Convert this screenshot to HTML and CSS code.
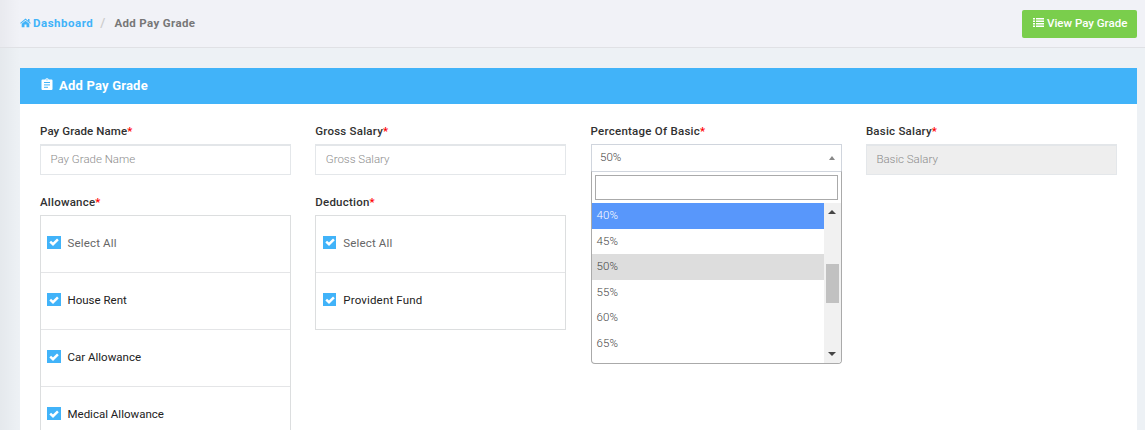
FILE: index.html
```html
<!DOCTYPE html>
<html lang="en">
<head>
<meta charset="utf-8">
<title>Add Pay Grade</title>
<link rel="stylesheet" href="styles.css">
</head>
<body>
<svg class="defs" aria-hidden="true">
  <symbol id="check" viewBox="0 0 10 8"><path d="M1.200 3.600 4 6.200 8.900 1.400" fill="none" stroke="#fff" stroke-width="2.500"/></symbol>
</svg>
<header class="topbar">
  <nav class="crumbs">
    <svg class="home" viewBox="0 0 11 10"><path d="M5.5 2.7 9.3 5.8V9.3H6.5V6.5h-2v2.8H1.7V5.8z"/><path d="M.5 5.4 5.5 1.2l5 4.2" fill="none" stroke="#41b3f9" stroke-width="1.1"/><path d="M8 1h1.5v3L8 2.8z"/></svg>
    <a class="crumb-link">Dashboard</a><span class="slash">/</span><span class="crumb-current">Add Pay Grade</span>
  </nav>
  <a class="view-btn"><svg class="list-icon" viewBox="0 0 11 9"><path d="M0 0h2v1.6H0zM3 0h8v1.6H3zM0 2.5h2v1.6H0zM3 2.5h8v1.6H3zM0 5h2v1.6H0zM3 5h8v1.6H3zM0 7.4h2V9H0zM3 7.4h8V9H3z"/></svg><span>View Pay Grade</span></a>
</header>
<main class="panel">
  <h1 class="panel-head"><svg class="clip" viewBox="0 0 12 13"><path fill="#fff" d="M1.5 1.5h2.8a1.8 1.8 0 0 1 3.4 0h2.8a1 1 0 0 1 1 1V11a1 1 0 0 1-1 1h-9a1 1 0 0 1-1-1V2.500a1 1 0 0 1 1-1z"/><path d="M3 4.500h6M3 6.900h6M3 9.300h4" stroke="#41b3f9" stroke-width="1"/><circle cx="6" cy="1.800" r=".6" fill="#41b3f9"/></svg><span>Add Pay Grade</span></h1>
  <form class="fields">
    <div class="field">
      <label class="label w-name">Pay Grade Name<b>*</b></label>
      <div class="input">Pay Grade Name</div>
    </div>
    <div class="field">
      <label class="label">Gross Salary<b>*</b></label>
      <div class="input">Gross Salary</div>
    </div>
    <div class="field">
      <label class="label w-percent">Percentage Of Basic<b>*</b></label>
      <div class="select"><span class="value">50%</span><i class="arrow"></i>
        <div class="dropdown">
          <div class="search"></div>
          <div class="results">
            <ul class="options">
              <li class="option highlighted">40%</li>
              <li class="option">45%</li>
              <li class="option selected">50%</li>
              <li class="option">55%</li>
              <li class="option">60%</li>
              <li class="option">65%</li>
            </ul>
            <div class="scrollbar"><i class="arrow up"></i><div class="thumb"></div><i class="arrow down"></i></div>
          </div>
        </div>
      </div>
    </div>
    <div class="field">
      <label class="label">Basic Salary<b>*</b></label>
      <div class="input disabled">Basic Salary</div>
    </div>
    <div class="field">
      <label class="label">Allowance<b>*</b></label>
      <ul class="checks wide">
        <li class="check-row all"><span class="box"><svg><use href="#check"/></svg></span>Select All</li>
        <li class="check-row"><span class="box"><svg><use href="#check"/></svg></span>House Rent</li>
        <li class="check-row"><span class="box"><svg><use href="#check"/></svg></span>Car Allowance</li>
        <li class="check-row"><span class="box"><svg><use href="#check"/></svg></span>Medical Allowance</li>
      </ul>
    </div>
    <div class="field">
      <label class="label">Deduction<b>*</b></label>
      <ul class="checks">
        <li class="check-row all"><span class="box"><svg><use href="#check"/></svg></span>Select All</li>
        <li class="check-row"><span class="box"><svg><use href="#check"/></svg></span>Provident Fund</li>
      </ul>
    </div>
  </form>
</main>
</body>
</html>
```
FILE: styles.css
```css
* { box-sizing: border-box; }
body {
  margin: 0;
  height: 430px;
  overflow: hidden;
  background: linear-gradient(90deg, rgba(0,0,0,.035), rgba(0,0,0,0) 20px), #edf1f5;
  font: 300 11.5px/16px Roboto, "Noto Sans", sans-serif;
  color: #565656;
}
ul { list-style: none; margin: 0; padding: 0; }
.defs { display: none; }
.topbar {
  height: 48px;
  padding: 0 8px 0 20px;
  display: flex;
  align-items: center;
  justify-content: space-between;
  background: linear-gradient(90deg, rgba(0,0,0,.035), rgba(0,0,0,0) 20px), #f1f2f7;
  border-bottom: 1px solid #e0e1e5;
}
.crumbs { display: flex; align-items: center; height: 16px; margin-top: -1px; font-weight: 700; }
.home { width: 11px; height: 10px; fill: #41b3f9; margin-right: 2px; }
.crumb-link { color: #41b3f9; letter-spacing: .52px; }
.slash { color: #ccc; font-size: 13px; font-weight: 500; margin: 0 9px 0 7px; }
.crumb-current { color: #777; letter-spacing: .35px; }
.view-btn {
  width: 115px;
  height: 28px;
  display: flex;
  align-items: center;
  padding: 0 0 2px 11px;
  gap: 3px;
  border-radius: 2px;
  background: #7ace4c;
  color: #fff;
  font-weight: 500;
  white-space: nowrap;
}
.list-icon { width: 11px; height: 9px; flex: none; fill: #fff; }
.panel { margin: 20px 8px 0 20px; height: 362px; overflow: hidden; background: #fff; }
.panel-head {
  margin: 0;
  height: 36px;
  padding-left: 21px;
  display: flex;
  align-items: center;
  gap: 6px;
  background: #41b3f9;
  color: #fff;
  font-size: 13px;
  font-weight: 700;
  letter-spacing: .2px;
}
.clip { width: 12px; height: 13px; margin-top: -3px; }
.fields {
  padding: 19px 20px 0;
  display: grid;
  grid-template-columns: repeat(4, 1fr);
  column-gap: 24.2px;
  grid-template-rows: 71px auto;
}
.field { min-width: 0; }
.label { display: block; height: 21px; color: #313131; font-weight: 500; letter-spacing: .22px; }
.w-name { letter-spacing: .1px; }
.w-percent { letter-spacing: .25px; }
.label b { color: #f00; font-weight: 500; letter-spacing: 0; }
.input {
  height: 31px;
  padding: 5px 9.5px;
  border: 1px solid #e4e7ea;
  border-top: 2px solid #e3e6e9;
  color: #8c8c8c;
}
.disabled { background: #eee; }
.select {
  position: relative;
  height: 28px;
  padding: 0 6px 0 8.5px;
  display: flex;
  align-items: center;
  justify-content: space-between;
  border: 1px solid #d0d5dd;
  color: #444;
}
.value { padding-bottom: 2px; }
.arrow { width: 0; height: 0; border: 3px solid transparent; border-top: 0; border-bottom: 4px solid #888; }
.dropdown {
  position: absolute;
  top: 26px;
  left: -1px;
  right: -1px;
  height: 193px;
  border: 1px solid #aaa;
  border-top-color: #d0d5dd;
  border-radius: 0 0 4px 4px;
  background: #fff;
  overflow: hidden;
}
.search { height: 25px; margin: 3px; border: 1px solid #aaa; }
.results { display: flex; height: 160px; }
.options { flex: 1; }
.option { height: 25.6px; line-height: 25px; padding-left: 5px; letter-spacing: .1px; }
.highlighted { background: #5897fb; color: #fff; }
.selected { background: #ddd; }
.scrollbar {
  width: 17px;
  padding: 7px 2px;
  background: #f1f1f1;
  display: flex;
  flex-direction: column;
  align-items: center;
}
.up, .down { border-width: 0 4px 4px; border-bottom-color: #454545; }
.down { transform: rotate(180deg); margin-top: auto; }
.thumb { width: 13px; height: 39px; background: #c1c1c1; margin-top: 50px; }
.checks { border: 1px solid #dcdedf; }
.check-row {
  height: 57px;
  padding: 0 0 2px 7px;
  display: flex;
  align-items: center;
  font-weight: 400;
  color: #222;
  letter-spacing: .16px;
}
.check-row + .check-row { border-top: 1px solid #e4e5e7; }
.wide .check-row { padding-left: 6px; letter-spacing: 0; }
.checks .all { height: 56px; padding-bottom: 3px; color: #666; letter-spacing: .16px; }
.box { width: 13px; height: 13px; margin: -1px 7px 0 0; display: grid; place-items: center; background: #41b3f9; }
.wide .box { width: 14px; margin-right: 6.5px; }
.box svg { width: 10px; height: 8px; }
```
